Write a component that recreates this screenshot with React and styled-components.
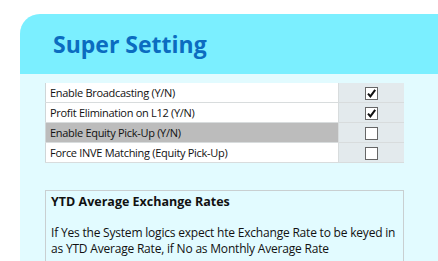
import styled, { createGlobalStyle } from 'styled-components';

const GlobalStyle = createGlobalStyle`
  html, body {
    margin: 0;
    padding: 0;
    background: #ffffff;
  }
  body {
    font-family: "Open Sans", "Noto Sans", "DejaVu Sans", sans-serif;
    overflow: hidden;
  }
`;

const settings = [
  { label: 'Enable Broadcasting (Y/N)', checked: true },
  { label: 'Profit Elimination on L12 (Y/N)', checked: true },
  { label: 'Enable Equity Pick-Up (Y/N)', checked: false, selected: true },
  { label: 'Force INVE Matching (Equity Pick-Up)', checked: false },
];

export default function App() {
  return (
    <>
      <GlobalStyle />
      <Page>
        <Panel>
          <Header>
            <Title>Super Setting</Title>
          </Header>
          <Content>
            <Table>
              <tbody>
                {settings.map((s) => (
                  <tr key={s.label}>
                    <Label $selected={s.selected}>{s.label}</Label>
                    <CheckCell>
                      <Box>
                        {s.checked && (
                          <svg width="11" height="11" viewBox="0 0 11 11">
                            <path
                              d="M2 5.6 L4.4 8.4 L9.2 1.8"
                              fill="none"
                              stroke="#111"
                              strokeWidth="2"
                            />
                          </svg>
                        )}
                      </Box>
                    </CheckCell>
                  </tr>
                ))}
              </tbody>
            </Table>
            <InfoBox>
              <InfoTitle>YTD Average Exchange Rates</InfoTitle>
              <InfoText>
                If Yes the System logics expect hte Exchange Rate to be keyed in
                as YTD Average Rate, if No as Monthly Average Rate
              </InfoText>
            </InfoBox>
          </Content>
        </Panel>
      </Page>
    </>
  );
}

const Page = styled.div`
  padding: 14px 0 0 20px;
  height: 261px;
  box-sizing: border-box;
`;

const Panel = styled.div`
  background: #e2fbff;
  border-top-left-radius: 20px;
  overflow: hidden;
  height: 100%;
`;

const Header = styled.div`
  background: #7befff;
  height: 60px;
  display: flex;
  align-items: center;
  padding-left: 33px;
`;

const Title = styled.h1`
  margin: 0;
  font-size: 23px;
  font-weight: 700;
  color: #0b6cc0;
`;

const Content = styled.div`
  padding: 9px 34px 0 25px;
`;

const Table = styled.table`
  width: 359px;
  border-collapse: collapse;
  border-left: 1px solid #cfd6d8;
  font-size: 11px;
  letter-spacing: -0.3px;
  color: #111;
  td {
    height: 19px;
    border-bottom: 1px solid #d8dcdd;
    padding: 0;
  }
`;

const Label = styled.td`
  background: ${(p) => (p.$selected ? '#bcbcbc' : '#ffffff')};
  padding-left: 4px !important;
  white-space: nowrap;
`;

const CheckCell = styled.td`
  width: 65px;
  background: #e3eaed;
  border-left: 1px solid #d8dcdd;
  text-align: center;
  vertical-align: middle;
`;

const Box = styled.span`
  display: inline-flex;
  align-items: center;
  justify-content: center;
  width: 11px;
  height: 11px;
  border: 1px solid #666;
  background: #fff;
  vertical-align: middle;
`;

const InfoBox = styled.div`
  margin-top: 27px;
  width: 359px;
  box-sizing: border-box;
  height: 80px;
  border: 1px solid #c9cfd1;
  border-bottom: none;
  padding: 2px 5px;
  color: #111;
`;

const InfoTitle = styled.div`
  font-size: 12.5px;
  font-weight: 700;
  line-height: 17px;
`;

const InfoText = styled.p`
  margin: 15px 0 0;
  font-size: 12px;
  letter-spacing: -0.2px;
  line-height: 16px;
`;
